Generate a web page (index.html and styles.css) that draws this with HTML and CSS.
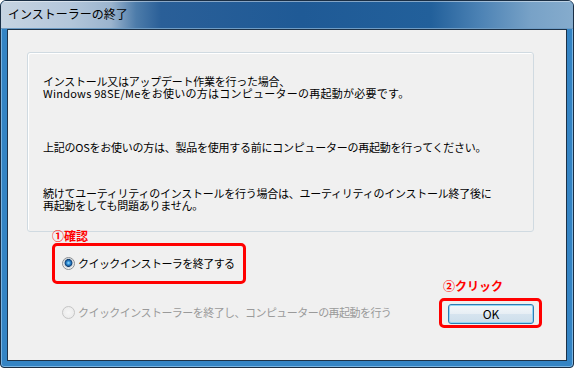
FILE: index.html
```html
<!DOCTYPE html>
<html>
<head>
  <title>インストーラーの終了</title>
  <link rel="stylesheet" href="styles.css">
</head>
<body>
  <div class="window">
    <div class="titlebar">インストーラーの終了</div>

    <div class="client">
      <div class="group">
        <p>インストール又はアップデート作業を行った場合、<br><span class="wide">Windows 98SE/Meをお使いの方はコンピューターの再起動が必要です。</span></p>
        <p class="gap-1">上記のOSをお使いの方は、製品を使用する前にコンピューターの再起動を行ってください。</p>
        <p class="gap-2">続けてユーティリティのインストールを行う場合は、ユーティリティのインストール終了後に<br>再起動をしても問題ありません。</p>
      </div>

      <div class="choices">
        <div class="step">①確認</div>
        <div class="mark mark-first">
          <label class="radio"><span class="dot checked"></span>クイックインストーラを終了する</label>
        </div>
        <label class="radio disabled restart"><span class="dot"></span>クイックインストーラーを終了し、コンピューターの再起動を行う</label>

        <div class="ok-area">
          <div class="step step-2">②クリック</div>
          <div class="mark mark-ok">
            <button class="ok">OK</button>
          </div>
        </div>
      </div>
    </div>
  </div>
</body>
</html>
```

FILE: styles.css
```css
body {
  margin: 0;
  font-family: "Noto Sans CJK JP", "Liberation Sans", sans-serif;
  font-size: 11px;
  color: #000;
  background: #fff;
}

.window {
  width: 574px;
  height: 368px;
  box-sizing: border-box;
  border: 1px solid #1a2e44;
  border-radius: 6px 6px 4px 4px;
  background: #3484c4;
  box-shadow: inset 0 0 0 1px #79b4e2;
  overflow: hidden;
}

.titlebar {
  height: 28px;
  box-sizing: border-box;
  padding: 5px 0 0 7px;
  font-size: 12px;
  line-height: 16px;
  color: #000;
  background: linear-gradient(to right, #c7d4e2 0, #b3c6da 70px, #9bb4ce 110px, #4d7caa 135px, #2a5f98 160px, #1f5a96 300px, #22609b 430px, #4d83b5 480px, #78a2c7 530px, #86accd 574px);
  box-shadow: inset 0 1px 0 rgba(255, 255, 255, 0.45), inset 0 -1px 0 #6f9cc4;
}

.client {
  margin: 0 6px 6px 6px;
  height: 332px;
  box-sizing: border-box;
  border: 1px solid #1d3248;
  background: #f0f0f0;
}

.group {
  margin: 22px 0 0 19px;
  width: 507px;
  height: 180px;
  box-sizing: border-box;
  padding: 22px 0 0 15px;
  border: 1px solid #d0dae1;
  border-radius: 3px;
  box-shadow: inset 1px 1px 0 #fff;
  letter-spacing: -0.25px;
}

.group p {
  margin: 0;
  line-height: 12px;
}

.group .wide {
  letter-spacing: 0.25px;
}

.group .gap-1 {
  margin-top: 42px;
}

.group .gap-2 {
  margin-top: 34px;
}

.choices {
  display: grid;
  grid-template-columns: 1fr auto;
  margin: -3px 24px 0 44px;
}

.step {
  grid-column: 1;
  font-size: 12px;
  font-weight: bold;
  line-height: 14px;
  color: #ff0000;
}

.mark {
  border: 3px solid #ff0000;
  border-radius: 5px;
  box-sizing: border-box;
}

.mark-first {
  grid-column: 1;
  justify-self: start;
  width: 194px;
  height: 41px;
  padding-left: 7px;
  display: flex;
  align-items: center;
}

.radio {
  display: flex;
  align-items: center;
  gap: 3px;
  font-size: 11px;
  line-height: 13px;
  letter-spacing: -0.55px;
}

.radio.disabled {
  color: #9a9a9a;
}

.restart {
  grid-column: 1;
  height: 31px;
  margin-top: 13px;
  padding-left: 10px;
}

.dot {
  flex: none;
  width: 13px;
  height: 13px;
  box-sizing: border-box;
  border-radius: 50%;
  border: 1px solid #8a8e93;
  background: radial-gradient(circle, #f7f7f7 0, #e2e2e2 100%);
}

.dot.checked {
  background: radial-gradient(circle at 50% 45%, #9fe0ff 0, #3a9be0 1.5px, #17589b 3px, #0f3d6e 3.6px, #c9d0d6 4.2px, #f2f2f2 5.5px);
}

.radio.disabled .dot {
  border-color: #c5c5c5;
  background: radial-gradient(circle, #f6f6f6 0, #e8e8e8 100%);
}

.ok-area {
  grid-column: 2;
  grid-row: 2 / 4;
  align-self: end;
  width: 103px;
}

.step-2 {
  margin: 0 0 5px 4px;
}

.mark-ok {
  padding: 3px 5px 1px 6px;
}

.ok {
  display: block;
  width: 86px;
  height: 20px;
  padding: 0;
  border: 1px solid #2f7db4;
  border-radius: 3px;
  background: linear-gradient(#f4f8fb 0, #e6eef4 50%, #d6e4ef 51%, #cddeeb 100%);
  box-shadow: inset 0 0 0 1px #93d6f5;
  font-family: "Noto Sans CJK JP", "Liberation Sans", sans-serif;
  font-size: 12px;
  line-height: 16px;
  color: #000;
}
```
